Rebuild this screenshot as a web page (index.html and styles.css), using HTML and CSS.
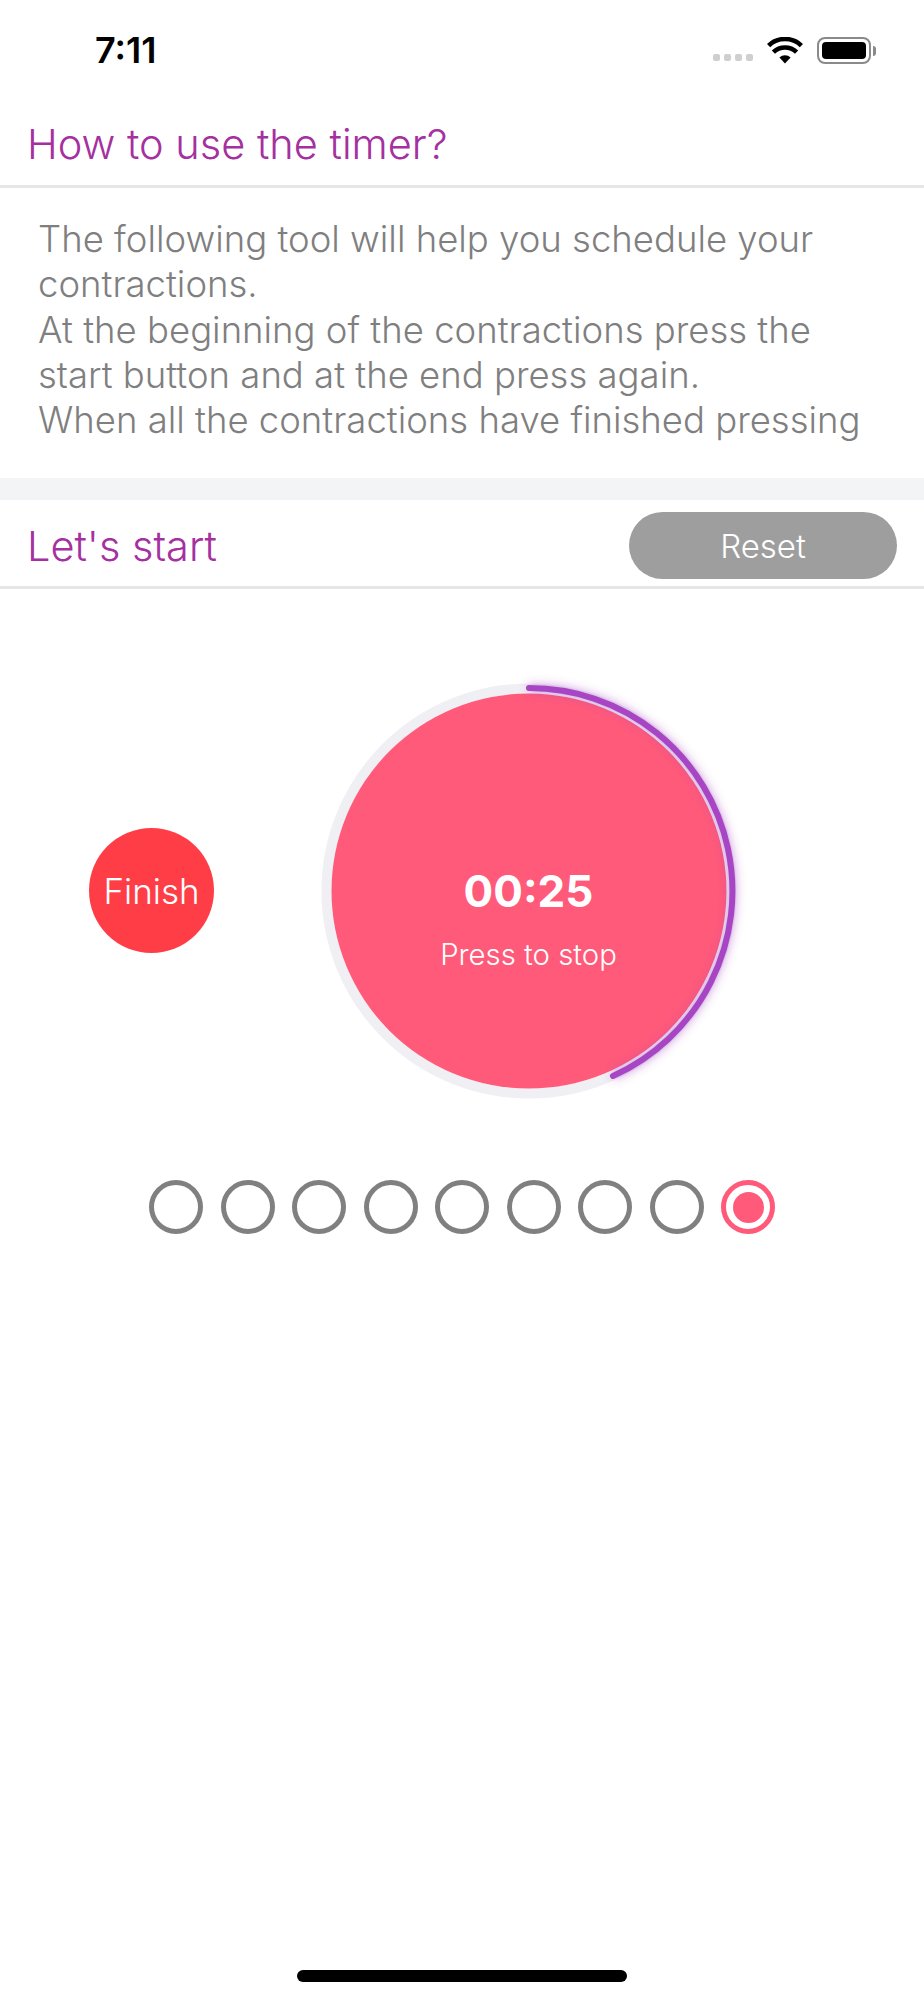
FILE: index.html
```html
<!DOCTYPE html>
<html lang="en">
<head>
<meta charset="utf-8">
<title>Contraction timer</title>
<link rel="stylesheet" href="styles.css">
</head>
<body>
<div class="screen">
  <header class="status">
    <span class="clock">7:11</span>
    <div class="status-icons">
      <div class="signal"><i></i><i></i><i></i><i></i></div>
      <svg class="wifi" width="36" height="27" viewBox="0 0 36 27">
        <path d="M18 26.5l-5.6 -6a8.4 8.4 0 0 1 11.2 0z" fill="#000"/>
        <path d="M6.4 15.2a16.6 16.6 0 0 1 23.2 0" fill="none" stroke="#000" stroke-width="4.6"/>
        <path d="M1.6 8.6a23.6 23.6 0 0 1 32.8 0" fill="none" stroke="#000" stroke-width="4.6"/>
      </svg>
      <div class="battery"><div class="battery-fill"></div></div>
      <div class="battery-cap"></div>
    </div>
  </header>

  <section class="section-head first">
    <h2 class="title">How to use the timer?</h2>
  </section>
  <p class="intro">The following tool will help you schedule your contractions.<br>At the beginning of the contractions press the start button and at the end press again.<br>When all the contractions have finished pressing</p>
  <div class="band"></div>
  <section class="section-head second">
    <h2 class="title">Let's start</h2>
    <button class="reset">Reset</button>
  </section>

  <main class="timer-row">
    <button class="finish">Finish</button>
    <div class="dial">
      <svg class="ring" width="440" height="440" viewBox="0 0 440 440">
        <defs>
          <filter id="glow" x="-10%" y="-10%" width="120%" height="120%">
            <feGaussianBlur stdDeviation="5"/>
          </filter>
        </defs>
        <circle cx="220" cy="220" r="202.5" fill="none" stroke="#efeff4" stroke-width="10"/>
        <circle cx="220" cy="220" r="197.5" fill="#ff5a79"/>
        <path d="M220 17 A203 203 0 0 1 304 405" fill="none" stroke="#a845c4" stroke-opacity=".5" stroke-width="8" filter="url(#glow)"/>
        <path d="M220 17 A203 203 0 0 1 304 405" fill="none" stroke="#a845c4" stroke-width="6" stroke-linecap="round"/>
      </svg>
      <div class="dial-text">
        <span class="time">00:25</span>
        <span class="hint">Press to stop</span>
      </div>
    </div>
  </main>

  <div class="dots">
    <span class="dot"></span><span class="dot"></span><span class="dot"></span><span class="dot"></span><span class="dot"></span><span class="dot"></span><span class="dot"></span><span class="dot"></span><span class="dot active"></span>
  </div>

  <div class="home-bar"></div>
</div>
</body>
</html>
```
FILE: styles.css
```css
* { box-sizing: border-box; }
html, body { margin: 0; background: #fff; }
.screen {
  width: 924px;
  height: 2000px;
  display: flex;
  flex-direction: column;
  font-family: Inter, "Liberation Sans", sans-serif;
  overflow: hidden;
}
.status {
  height: 100px;
  flex: none;
  display: flex;
  align-items: flex-start;
  justify-content: space-between;
  padding: 30px 0 0 95px;
}
.clock { font-size: 36px; line-height: 41px; font-weight: 600; color: #000; }
.status-icons { display: flex; align-items: center; height: 41px; padding-right: 48px; }
.signal { display: flex; gap: 4px; margin-top: 13px; margin-right: 14px; }
.signal i { width: 7px; height: 7px; border-radius: 2px; background: #cfcfcf; display: block; }
.wifi { margin-right: 14px; }
.battery {
  width: 54px; height: 27px; padding: 3px;
  border: 2.5px solid #8a8a8a; border-radius: 8px;
}
.battery-fill { width: 100%; height: 100%; background: #000; border-radius: 4px; }
.battery-cap { width: 3px; height: 10px; margin-left: 2px; background: #8a8a8a; border-radius: 0 3px 3px 0; }

.section-head {
  display: flex;
  align-items: center;
  justify-content: space-between;
  padding: 0 27px;
  border-bottom: 3px solid #e6e6e8;
  flex: none;
}
.section-head.first { height: 88px; padding-top: 2px; }
.section-head.second { height: 89px; padding-top: 5px; }
.title { margin: 0; font-size: 41.5px; line-height: 46px; font-weight: 300; color: #a5309f; }
.intro {
  margin: 0;
  height: 290px;
  flex: none;
  padding: 29px 38px 0;
  font-size: 36.5px;
  line-height: 45.3px;
  font-weight: 300;
  color: #7f7f7f;
}
.band { height: 22px; flex: none; background: #f3f4f6; }
.reset {
  width: 268px; height: 67px;
  border: 0; border-radius: 34px;
  background: #9e9e9e; color: #fff;
  font: 300 33px Inter, "Liberation Sans", sans-serif;
}
.timer-row {
  display: flex;
  align-items: center;
  padding: 81.5px 0 0 89px;
  flex: none;
}
.finish {
  width: 125px; height: 125px;
  border: 0; border-radius: 50%;
  background: #ff3d47; color: #fff;
  font: 300 35px Inter, "Liberation Sans", sans-serif;
  padding: 0;
  flex: none;
}
.dial { position: relative; width: 440px; height: 440px; margin-left: 94.5px; flex: none; }
.ring { display: block; }
.dial-text {
  position: absolute; inset: 0;
  padding-top: 56px;
  display: flex; flex-direction: column; align-items: center; justify-content: center;
  color: #fff;
}
.time { font-size: 44px; line-height: 50px; font-weight: 700; }
.hint { font-size: 29.3px; line-height: 32px; font-weight: 300; margin-top: 23px; }
.dots { display: flex; justify-content: center; gap: 17.5px; margin-top: 69.5px; }
.dot { width: 54px; height: 54px; border: 5px solid #808080; border-radius: 50%; display: flex; align-items: center; justify-content: center; flex: none; }
.dot.active { border-color: #ff5a79; }
.dot.active::after { content: ""; width: 31px; height: 31px; border-radius: 50%; background: #ff5a79; }
.home-bar { width: 330px; height: 12px; border-radius: 6px; background: #000; margin: auto auto 18px; flex: none; }
```
